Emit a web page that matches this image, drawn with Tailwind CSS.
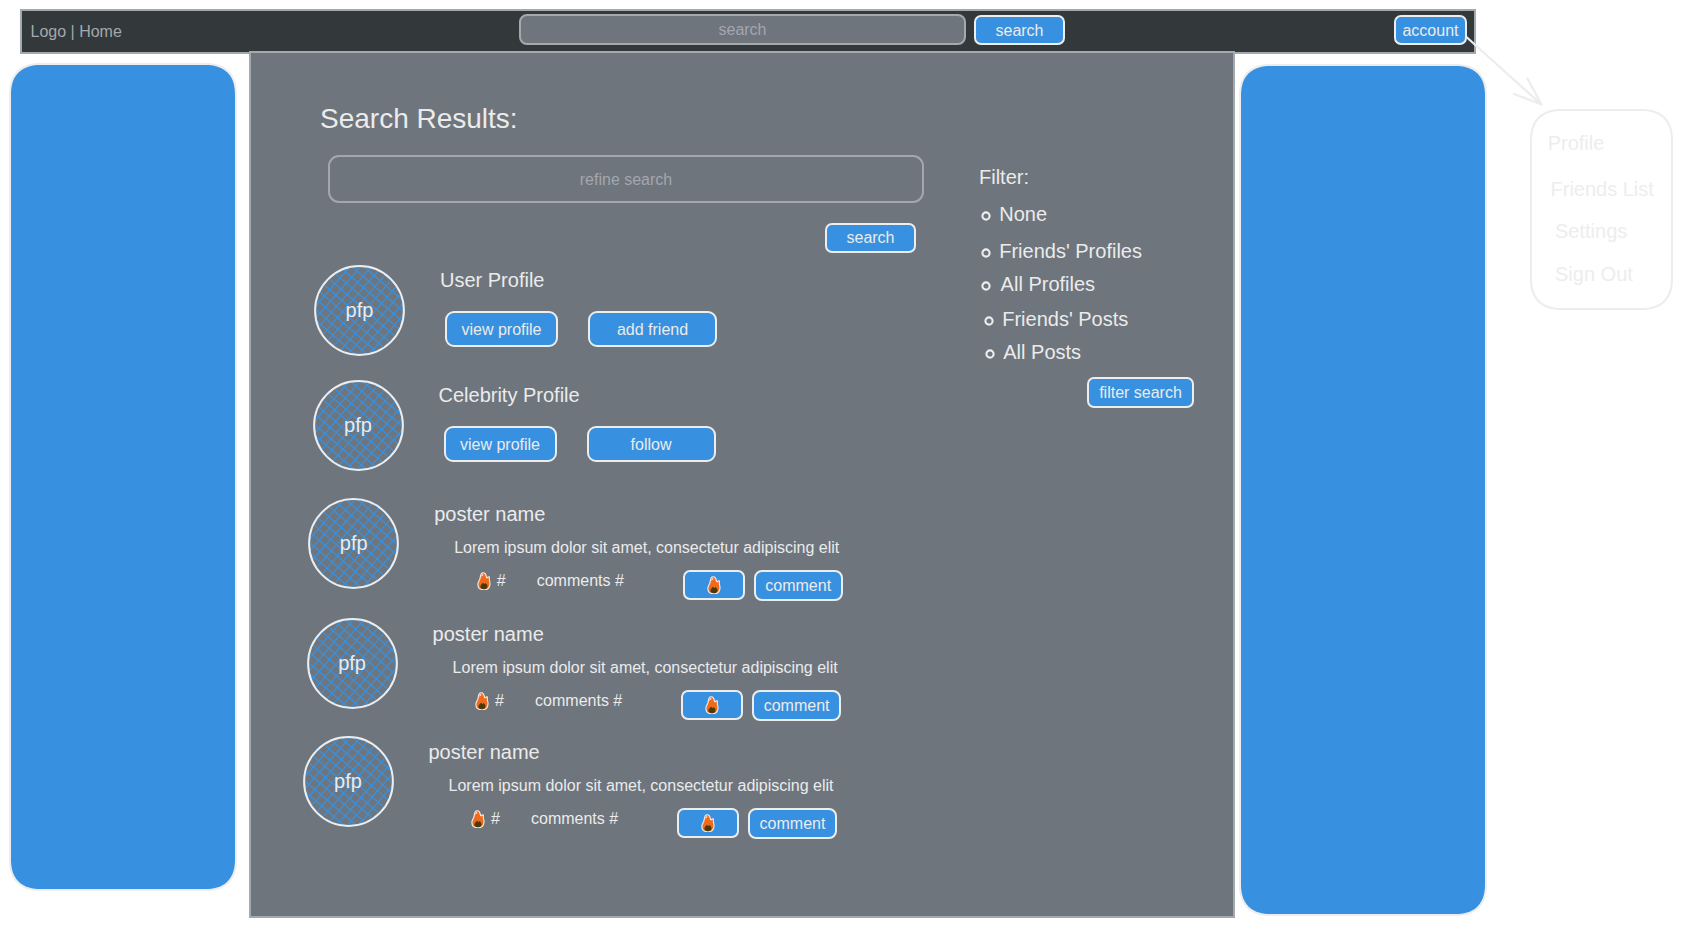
<!DOCTYPE html>
<html lang="en">
<head>
<meta charset="utf-8">
<title>Search Results</title>
<script src="https://cdn.jsdelivr.net/npm/@tailwindcss/browser@4"></script>
</head>
<body class="relative h-[927px] w-[1682px] overflow-hidden bg-white font-['Liberation_Sans',Arial,sans-serif] text-base leading-[18px] text-[#ebebeb]">
<svg class="absolute size-0" aria-hidden="true">
  <defs>
    <clipPath id="disc"><circle cx="45.5" cy="45.5" r="45.2"/></clipPath>
    <symbol id="avatar" viewBox="0 0 91 91">
      <g clip-path="url(#disc)">
        <path transform="translate(45.5 45.5) rotate(41)" d="M-46-44H46M-46-36H46M-46-28H46M-46-20H46M-46-12H46M-46-4H46M-46 4H46M-46 12H46M-46 20H46M-46 28H46M-46 36H46M-46 44H46M-44-46V46M-36-46V46M-28-46V46M-20-46V46M-12-46V46M-4-46V46M4-46V46M12-46V46M20-46V46M28-46V46M36-46V46M44-46V46" stroke="#3791e0" stroke-width="1.3"/>
      </g>
      <circle cx="45.5" cy="45.5" r="44.4" fill="none" stroke="#ededed" stroke-width="2"/>
    </symbol>
    <symbol id="fire" viewBox="0 0 14 18.5">
      <path d="M4.400 1.500C5.400.5 7.400.6 8.300 1.800 9.200 3 9.300 4.300 9.600 5.600c.4.300.8.200 1-.2.400-.5.700-.9 1.700-.6.200 1.300-.2 2.400.2 3.800.4 1.300.6 2.400.5 3.700-.2 3.400-2.600 5.500-6.100 5.500-3.600 0-5.900-2.200-6-5.400 0-2.200 1.100-3.500 1.900-5.200C3.500 5.400 3.200 3 4.400 1.500z" fill="#f06a1c" stroke="#f4eee8" stroke-width="1.1" stroke-linejoin="round"/>
      <path d="M4.300 4.800C4.100 3.200 4.600 2 6 1.900c.9.500.2 1.800-.6 2.200z" fill="#f8d5c2"/>
      <path d="M5.800 10.800c.7.300 1.200.700 1.500 1.300.5-.2.900-.6 1.200-1.200 1.200 1 2 2.100 2 3.300 0 1.800-1.400 3-3.500 3s-3.600-1-3.600-2.800c0-1.500 1.800-2 2.400-3.600z" fill="#4b3a06"/>
    </symbol>
    <symbol id="ring" viewBox="0 0 10 10">
      <circle cx="5" cy="5" r="3.600" fill="none" stroke="#ededed" stroke-width="2.100"/>
    </symbol>
  </defs>
</svg>

<header class="ml-[20px] mt-[9px] flex h-[45px] w-[1456px] border-2 border-[#a3a9af] bg-[#33383b]">
  <div class="ml-2 mt-3 w-[489px] pl-[0.500px] text-[#a4a9ac]">Logo | Home</div>
  <div class="mt-[3px] flex h-[31px] w-[447px] items-center justify-center rounded-[8px] border-2 border-[#a3a9af] bg-[#6e757d] pt-px text-[#a3a6b0]">search</div>
  <button class="ml-2 mt-1 h-[30px] w-[91px] rounded-[7px] border-2 border-[#ededed] bg-[#3791e0] pt-px">search</button>
  <button class="ml-[329px] mt-1 h-[30px] w-[73px] rounded-[7px] border-2 border-[#ededed] bg-[#3791e0] pt-px">account</button>
</header>

<div class="relative -mt-[3px] flex items-start">
  <aside class="ml-[9px] mt-3 h-[828px] w-[228px] rounded-[32px] border-2 border-[#ededed] bg-[#3791e0] [corner-shape:superellipse(1.27)]"></aside>

  <main class="ml-3 flex h-[867px] w-[986px] items-start border-2 border-[#a3a9af] bg-[#6e757d]">
    <div class="w-[709px] shrink-0">
      <h1 class="ml-[69px] mt-[50px] text-[28px] leading-8">Search Results:</h1>
      <div class="ml-[77px] mt-5 flex h-12 w-[596px] items-center justify-center rounded-[11px] border-2 border-[#a3a6b0] pt-px text-[#a3a6b0]">refine search</div>
      <button class="ml-[574px] mt-5 block h-[30px] w-[91px] rounded-[7px] border-2 border-[#ededed] bg-[#3791e0]">search</button>

      <section class="ml-[63px] mt-3 flex h-[91px]">
        <div class="grid size-[91px] place-items-center text-xl leading-[23px]">
          <svg class="col-start-1 row-start-1 size-[91px]"><use href="#avatar"/></svg>
          <span class="col-start-1 row-start-1">pfp</span>
        </div>
        <div class="ml-[35px] mt-1">
          <h2 class="text-xl leading-[23px]">User Profile</h2>
          <div class="ml-[5px] mt-[19px] flex gap-[30px]">
            <button class="h-[36px] w-[113px] rounded-[9px] border-2 border-[#ededed] bg-[#3791e0] pt-px">view profile</button>
            <button class="h-[36px] w-[129px] rounded-[9px] border-2 border-[#ededed] bg-[#3791e0] pt-px">add friend</button>
          </div>
        </div>
      </section>

      <section class="ml-[61.500px] mt-6 flex h-[91px]">
        <div class="grid size-[91px] place-items-center text-xl leading-[23px]">
          <svg class="col-start-1 row-start-1 size-[91px]"><use href="#avatar"/></svg>
          <span class="col-start-1 row-start-1">pfp</span>
        </div>
        <div class="ml-[35px] mt-1">
          <h2 class="text-xl leading-[23px]">Celebrity Profile</h2>
          <div class="ml-[5px] mt-[19px] flex gap-[30px]">
            <button class="h-[36px] w-[113px] rounded-[9px] border-2 border-[#ededed] bg-[#3791e0] pt-px">view profile</button>
            <button class="h-[36px] w-[129px] rounded-[9px] border-2 border-[#ededed] bg-[#3791e0] pt-px">follow</button>
          </div>
        </div>
      </section>

      <article class="ml-[57.200px] mt-[27px] flex h-[103px]">
        <div class="grid size-[91px] place-items-center text-xl leading-[23px]">
          <svg class="col-start-1 row-start-1 size-[91px]"><use href="#avatar"/></svg>
          <span class="col-start-1 row-start-1">pfp</span>
        </div>
        <div class="ml-[35px] mt-[5px]">
          <h2 class="text-xl leading-[23px]">poster name</h2>
          <p class="ml-5 mt-[13px]">Lorem ipsum dolor sit amet, consectetur adipiscing elit</p>
          <div class="ml-[42.500px] mt-[13px] flex items-start">
            <svg class="mt-[1.500px] h-[18.500px] w-3.5"><use href="#fire"/></svg>
            <span class="ml-1.5 mt-0.5 w-[40px]">#</span>
            <span class="mt-0.5 w-[146px]">comments #</span>
            <button class="flex h-[30px] w-[62px] items-center justify-center rounded-[7px] border-2 border-[#ededed] bg-[#3791e0]"><svg class="h-[18.500px] w-3.5"><use href="#fire"/></svg></button>
            <button class="ml-[9px] h-[31px] w-[89px] rounded-[8px] border-2 border-[#ededed] bg-[#3791e0]">comment</button>
          </div>
        </div>
      </article>

      <article class="ml-[55.600px] mt-[17px] flex h-[103px]">
        <div class="grid size-[91px] place-items-center text-xl leading-[23px]">
          <svg class="col-start-1 row-start-1 size-[91px]"><use href="#avatar"/></svg>
          <span class="col-start-1 row-start-1">pfp</span>
        </div>
        <div class="ml-[35px] mt-[5px]">
          <h2 class="text-xl leading-[23px]">poster name</h2>
          <p class="ml-5 mt-[13px]">Lorem ipsum dolor sit amet, consectetur adipiscing elit</p>
          <div class="ml-[42.500px] mt-[13px] flex items-start">
            <svg class="mt-[1.500px] h-[18.500px] w-3.5"><use href="#fire"/></svg>
            <span class="ml-1.5 mt-0.5 w-[40px]">#</span>
            <span class="mt-0.5 w-[146px]">comments #</span>
            <button class="flex h-[30px] w-[62px] items-center justify-center rounded-[7px] border-2 border-[#ededed] bg-[#3791e0]"><svg class="h-[18.500px] w-3.5"><use href="#fire"/></svg></button>
            <button class="ml-[9px] h-[31px] w-[89px] rounded-[8px] border-2 border-[#ededed] bg-[#3791e0]">comment</button>
          </div>
        </div>
      </article>

      <article class="ml-[51.500px] mt-[15px] flex h-[103px]">
        <div class="grid size-[91px] place-items-center text-xl leading-[23px]">
          <svg class="col-start-1 row-start-1 size-[91px]"><use href="#avatar"/></svg>
          <span class="col-start-1 row-start-1">pfp</span>
        </div>
        <div class="ml-[35px] mt-[5px]">
          <h2 class="text-xl leading-[23px]">poster name</h2>
          <p class="ml-5 mt-[13px]">Lorem ipsum dolor sit amet, consectetur adipiscing elit</p>
          <div class="ml-[42.500px] mt-[13px] flex items-start">
            <svg class="mt-[1.500px] h-[18.500px] w-3.5"><use href="#fire"/></svg>
            <span class="ml-1.5 mt-0.5 w-[40px]">#</span>
            <span class="mt-0.5 w-[146px]">comments #</span>
            <button class="flex h-[30px] w-[62px] items-center justify-center rounded-[7px] border-2 border-[#ededed] bg-[#3791e0]"><svg class="h-[18.500px] w-3.5"><use href="#fire"/></svg></button>
            <button class="ml-[9px] h-[31px] w-[89px] rounded-[8px] border-2 border-[#ededed] bg-[#3791e0]">comment</button>
          </div>
        </div>
      </article>
    </div>

    <div class="mt-[113px] text-xl leading-[23px]">
      <h2 class="ml-[19px]">Filter:</h2>
      <ul>
        <li class="ml-[20.600px] mt-3.5 flex"><svg class="mr-[8.600px] mt-[7.500px] size-2.5"><use href="#ring"/></svg>None</li>
        <li class="ml-[20.600px] mt-3.5 flex"><svg class="mr-[8.600px] mt-[7.500px] size-2.5"><use href="#ring"/></svg>Friends' Profiles</li>
        <li class="ml-[21px] mt-2.5 flex"><svg class="mr-[9.600px] mt-[7.500px] size-2.5"><use href="#ring"/></svg>All Profiles</li>
        <li class="ml-[23.600px] mt-3 flex"><svg class="mr-[8.600px] mt-[7.500px] size-2.5"><use href="#ring"/></svg>Friends' Posts</li>
        <li class="ml-[24.700px] mt-2.5 flex"><svg class="mr-[8.600px] mt-[7.500px] size-2.5"><use href="#ring"/></svg>All Posts</li>
      </ul>
      <button class="ml-[127px] mt-[13px] block h-[31px] w-[107px] rounded-[7px] border-2 border-[#ededed] bg-[#3791e0] text-base leading-[18px]">filter search</button>
    </div>
  </main>

  <aside class="ml-1 mt-[13px] h-[852px] w-[248px] rounded-[32px] border-2 border-[#ededed] bg-[#3791e0] [corner-shape:superellipse(1.27)]"></aside>

  <nav class="ml-[43px] mt-[58px] h-[201px] w-[143px] rounded-[32px] border-2 border-[#ededed] pt-[21px] text-xl leading-[23px] text-[#ededed] [corner-shape:superellipse(1.27)]">
    <div class="ml-[15.700px]">Profile</div>
    <div class="ml-[18.500px] mt-[23px] whitespace-nowrap">Friends List</div>
    <div class="ml-[23px] mt-[19px]">Settings</div>
    <div class="ml-[23px] mt-5">Sign Out</div>
  </nav>
</div>

<!-- Arrow from the account button to its menu -->
<svg class="absolute left-[1460px] top-[30px] h-20 w-[90px]" fill="none" stroke="#ededed" stroke-width="2.300" stroke-linecap="round" stroke-linejoin="round">
  <path d="M7 7.500Q44 41 81.500 74.500M54 64L81.500 74.500L67.500 48.500"/>
</svg>
</body>
</html>
